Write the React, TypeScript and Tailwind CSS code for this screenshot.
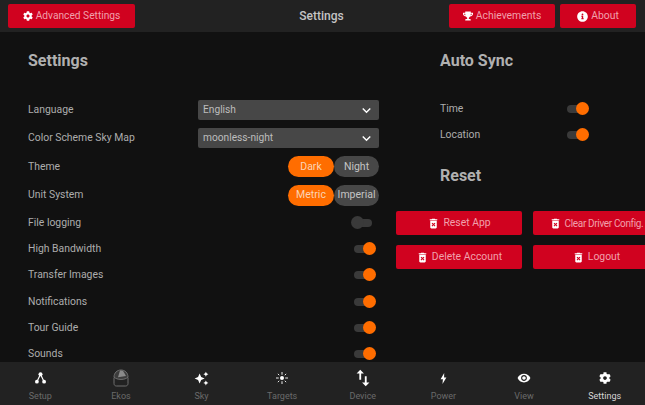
import React from "react";
import { FaCog, FaTrophy, FaInfoCircle } from "react-icons/fa";
import { MdDeleteForever, MdAutoAwesome, MdSwapVert, MdVisibility, MdKeyboardArrowDown } from "react-icons/md";

function RedButton({ icon, label, className, textClass = "" }: { icon: React.ReactNode; label: string; className: string; textClass?: string }) {
  return (
    <div className={`flex h-6 shrink-0 items-center justify-center gap-[3px] rounded-[2px] bg-[#d0021f] text-[10.4px] text-[#f0a0ac] ${className}`}>
      <span className="text-white">{icon}</span>
      <span className={`whitespace-nowrap ${textClass}`}>{label}</span>
    </div>
  );
}

function Row({ label, h, children }: { label: string; h: string; children?: React.ReactNode }) {
  return (
    <div className={`flex items-center justify-between ${h}`}>
      <span className="text-[10.4px] text-[#adadad]">{label}</span>
      {children}
    </div>
  );
}

function Toggle({ on = true }: { on?: boolean }) {
  return (
    <div className="relative mr-[7px] h-[8px] w-[18px] rounded-full bg-[#3a3a3a]">
      <div className={`absolute top-[-3px] h-[13px] w-[13px] rounded-full ${on ? "right-[-4px] bg-[#ff6d00]" : "left-[-3px] bg-[#3a3a3a]"}`} />
    </div>
  );
}

function Select({ value }: { value: string }) {
  return (
    <div className="flex h-5 w-[181px] items-center justify-between rounded-[2px] bg-[#474747] pl-[5px] pr-[4px] text-[10.2px] text-[#bdbdbd]">
      <span>{value}</span>
      <MdKeyboardArrowDown size={17} className="text-white" />
    </div>
  );
}

function Pills({ a, b }: { a: string; b: string }) {
  return (
    <div className="flex text-[10.5px]">
      <div className="flex h-[21px] w-[46px] items-center justify-center rounded-full bg-[#ff6d00] text-[#fbd4b5]">{a}</div>
      <div className="flex h-[21px] w-[45px] items-center justify-center rounded-full bg-[#474747] text-[#c4c4c4]">{b}</div>
    </div>
  );
}

function NavItem({ icon, label, active }: { icon: React.ReactNode; label: string; active?: boolean }) {
  return (
    <div className="flex flex-1 flex-col items-center">
      <div className="flex h-[24px] items-center justify-center text-white">{icon}</div>
      <span className={`text-[9px] leading-[12px] ${active ? "text-[#d6d6d6]" : "text-[#6a6a6a]"}`}>{label}</span>
    </div>
  );
}

const Setup = () => (
  <svg width="11" height="12" viewBox="0 0 11 12" fill="white">
    <circle cx="5.500" cy="2.300" r="2" />
    <circle cx="1.900" cy="9.700" r="1.900" />
    <circle cx="9.100" cy="9.700" r="1.900" />
    <path d="M5.500 2.300 1.900 9.700M5.500 2.300l3.600 7.400" stroke="white" strokeWidth="1.200" />
  </svg>
);

const Ekos = () => (
  <svg width="16" height="18" viewBox="0 0 16 18" fill="none" stroke="#6f6f6f" strokeWidth="1">
    <path d="M1 8.500V14.500c0 1.500 1 2.500 2.500 2.500h9c1.500 0 2.500-1 2.500-2.500V8.500" />
    <path d="M1 8c0-4 3-7 7-7s7 3 7 7c-1.500 1.700-4 2.400-7 2.400S2.500 9.700 1 8Z" fill="#3c3c3c" />
    <path d="M5 8.200 7 1.500l3 .2 3 5.300Z" fill="#8a8a8a" stroke="none" />
  </svg>
);

const Targets = () => (
  <svg width="12" height="12" viewBox="0 0 13 13" fill="white">
    <circle cx="6.500" cy="6.500" r="2.200" />
    <path d="M6.500 0v3M6.500 10v3M0 6.500h3M10 6.500h3M2 2l1.500 1.500M11 2 9.500 3.500M2 11l1.500-1.500M11 11 9.500 9.500" stroke="white" strokeWidth="1" />
  </svg>
);

const Power = () => (
  <svg width="7" height="11" viewBox="0 0 7 11" fill="white">
    <path d="M4.200 0 .6 6.200h2.300L2.500 11l3.900-6.600H4.100Z" />
  </svg>
);

export default function App() {
  return (
    <div className="flex h-[405px] w-[645px] flex-col overflow-hidden bg-[#111111] font-['Roboto',sans-serif]">
      <header className="flex h-8 shrink-0 items-center bg-[#222222] pl-2 pr-[9px]">
        <RedButton className="w-[127px]" icon={<FaCog size={10} />} label="Advanced Settings" textClass="text-[10.2px]" />
        <div className="flex-1 pl-[59px] text-center text-[12px] font-medium text-[#c4c4c4]">Settings</div>
        <RedButton className="mr-[5px] w-[106px]" icon={<FaTrophy size={10} />} label="Achievements" />
        <RedButton className="w-[76px]" icon={<FaInfoCircle size={11} />} label="About" />
      </header>

      <main className="flex min-h-0 flex-1 overflow-hidden">
        <section className="w-[396px] shrink-0 pl-[28px] pr-[17px] pt-[19px]">
          <h2 className="mb-[25px] text-[16px] leading-5 font-bold text-[#b0b0b0]">Settings</h2>
          <Row label="Language" h="h-[28px]"><Select value="English" /></Row>
          <Row label="Color Scheme Sky Map" h="h-[28px]"><Select value="moonless-night" /></Row>
          <Row label="Theme" h="h-[29px]"><Pills a="Dark" b="Night" /></Row>
          <Row label="Unit System" h="h-[28px]"><Pills a="Metric" b="Imperial" /></Row>
          <Row label="File logging" h="h-[27px]"><Toggle on={false} /></Row>
          <Row label="High Bandwidth" h="h-[26px]"><Toggle /></Row>
          <Row label="Transfer Images" h="h-[26px]"><Toggle /></Row>
          <Row label="Notifications" h="h-[27px]"><Toggle /></Row>
          <Row label="Tour Guide" h="h-[26px]"><Toggle /></Row>
          <Row label="Sounds" h="h-[26px]"><Toggle /></Row>
        </section>

        <section className="min-w-0 flex-1 pt-[19px]">
          <div className="ml-[44px] w-[152px]">
            <h2 className="mb-[25px] text-[16px] leading-5 font-bold text-[#b0b0b0]">Auto Sync</h2>
            <Row label="Time" h="h-[26px]"><Toggle /></Row>
            <Row label="Location" h="h-[26px]"><Toggle /></Row>
            <h2 className="mt-[18px] mb-[25px] text-[16px] leading-5 font-bold text-[#b0b0b0]">Reset</h2>
          </div>
          <div className="grid w-[263px] grid-cols-[126px_126px] gap-x-[11px] gap-y-[10px]">
            <RedButton className="w-[126px]" icon={<MdDeleteForever size={13} />} label="Reset App" />
            <RedButton className="w-[126px]" icon={<MdDeleteForever size={13} />} label="Clear Driver Config." textClass="tracking-[-0.35px] text-[10px]" />
            <RedButton className="w-[126px]" icon={<MdDeleteForever size={13} />} label="Delete Account" />
            <RedButton className="w-[126px]" icon={<MdDeleteForever size={13} />} label="Logout" />
          </div>
        </section>
      </main>

      <nav className="flex h-[43px] shrink-0 items-start bg-[#222222] pt-[4px]">
        <NavItem icon={<Setup />} label="Setup" />
        <NavItem icon={<Ekos />} label="Ekos" />
        <NavItem icon={<MdAutoAwesome size={15} />} label="Sky" />
        <NavItem icon={<Targets />} label="Targets" />
        <NavItem icon={<MdSwapVert size={22} />} label="Device" />
        <NavItem icon={<Power />} label="Power" />
        <NavItem icon={<MdVisibility size={14} />} label="View" />
        <NavItem icon={<FaCog size={12} />} label="Settings" active />
      </nav>
    </div>
  );
}
